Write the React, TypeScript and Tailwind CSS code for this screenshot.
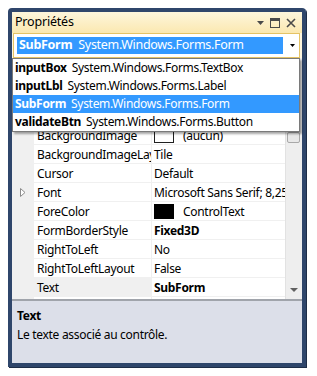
import React from "react";

type Row = {
  name: string;
  value: string;
  bold?: boolean;
  swatch?: "empty" | "black";
  expand?: boolean;
  selected?: boolean;
};

const rows: Row[] = [
  { name: "BackgroundImage", value: "(aucun)", swatch: "empty" },
  { name: "BackgroundImageLayout", value: "Tile" },
  { name: "Cursor", value: "Default" },
  { name: "Font", value: "Microsoft Sans Serif; 8,25pt", expand: true },
  { name: "ForeColor", value: "ControlText", swatch: "black" },
  { name: "FormBorderStyle", value: "Fixed3D", bold: true },
  { name: "RightToLeft", value: "No" },
  { name: "RightToLeftLayout", value: "False" },
  { name: "Text", value: "SubForm", bold: true, selected: true },
  { name: "TopMost", value: "False" },
];

const objects = [
  { name: "inputBox", type: "System.Windows.Forms.TextBox" },
  { name: "inputLbl", type: "System.Windows.Forms.Label" },
  { name: "SubForm", type: "System.Windows.Forms.Form", active: true },
  { name: "validateBtn", type: "System.Windows.Forms.Button" },
];

const font = { fontFamily: '"Noto Sans", "Open Sans", sans-serif' };

const GridRow = ({ row }: { row: Row }) => (
  <div className="flex h-[19px] text-[12px] leading-[19px] tracking-[-0.3px] text-black">
    <div className="flex w-[22px] shrink-0 items-center justify-center bg-[#f0f0f0]">
      {row.expand && (
        <svg width="6" height="9" viewBox="0 0 6 9">
          <path d="M0.5 0.5 L5 4.5 L0.5 8.5 Z" fill="white" stroke="#8c8c8c" />
        </svg>
      )}
    </div>
    <div
      className={`w-[118px] shrink-0 overflow-hidden whitespace-nowrap border-b border-r border-[#f0f0f0] pl-[3px] ${
        row.selected ? "bg-[#f0f0f0]" : "bg-white"
      }`}
    >
      {row.name}
    </div>
    <div
      className={`flex flex-1 items-center overflow-hidden whitespace-nowrap border-b border-[#f0f0f0] bg-white pl-[2px] ${
        row.bold ? "font-bold" : ""
      }`}
    >
      {row.swatch === "empty" && (
        <span className="mr-[9px] h-[15px] w-[20px] shrink-0 border border-[#202020] bg-white" />
      )}
      {row.swatch === "black" && (
        <span className="mr-[9px] h-[15px] w-[20px] shrink-0 bg-black" />
      )}
      {row.value}
    </div>
  </div>
);

export default function App() {
  return (
    <div className="h-[376px] w-[317px] bg-white pl-[8px] pt-[8px]" style={font}>
      <div className="flex h-[359px] w-[298px] flex-col rounded-t-[4px] border-4 border-[#2f466b] shadow-[1px_1px_0_#1d2d47]">
        {/* title bar */}
        <div className="flex h-[21px] items-center bg-gradient-to-b from-[#fdf6dc] to-[#fbe8b0] pl-[3px] pr-[6px]">
          <span className="text-[12.5px] tracking-[-0.2px] text-black">Propriétés</span>
          <div className="ml-auto flex items-center gap-[6px]">
            <svg width="7" height="4" viewBox="0 0 7 4">
              <path d="M0 0 H7 L3.5 4 Z" fill="#4a4a4a" />
            </svg>
            <svg width="10" height="10" viewBox="0 0 10 10">
              <rect x="0.5" y="0.5" width="9" height="9" fill="none" stroke="#4a4a4a" />
              <rect x="0" y="0" width="10" height="3" fill="#4a4a4a" />
            </svg>
            <svg width="10" height="10" viewBox="0 0 10 10">
              <path d="M1 1 L9 9 M9 1 L1 9" stroke="#4a4a4a" strokeWidth="1.6" />
            </svg>
          </div>
        </div>

        {/* object combo */}
        <div className="h-[25px] bg-[#fef6de] pl-[1px] pr-[2px]">
          <div className="flex h-[25px] border border-[#e5c365] bg-white">
            <div className="m-[3px] flex flex-1 items-center bg-[#3399ff] pl-[2px] text-[12.5px] tracking-[-0.3px] text-white">
              <span className="font-bold">SubForm</span>
              <span className="ml-[6px]">System.Windows.Forms.Form</span>
            </div>
            <div className="flex w-[13px] items-center justify-center">
              <svg width="5" height="3" viewBox="0 0 5 3">
                <path d="M0 0 H5 L2.5 3 Z" fill="black" />
              </svg>
            </div>
          </div>
        </div>

        {/* property grid */}
        <div className="relative flex h-[241px]">
          <div className="flex flex-1 flex-col overflow-hidden">
            <div className="flex h-[68px] shrink-0">
              <div className="w-[22px] bg-[#f0f0f0]" />
              <div className="flex-1 bg-white" />
            </div>
            {rows.map((r) => (
              <GridRow key={r.name} row={r} />
            ))}
          </div>
          <div className="relative w-[17px] shrink-0 border-l border-[#e2e2e2] bg-[#eeeeee]">
            <div className="absolute left-[1px] top-[74px] h-[11px] w-[13px] rounded-[2px] border border-[#a8a8a8] bg-[#e8e8e8]" />
            <svg
              className="absolute bottom-[7px] left-[4px]"
              width="8"
              height="4"
              viewBox="0 0 8 4"
            >
              <path d="M0 0 H8 L4 4 Z" fill="#606060" />
            </svg>
          </div>

          {/* drop down list over the grid */}
          <div className="absolute left-0 top-0 w-[288px] border border-[#7a7a7a] bg-white shadow-[2px_2px_2px_rgba(0,0,0,0.35)]">
            {objects.map((o) => (
              <div
                key={o.name}
                className={`flex h-[18px] items-center whitespace-nowrap pl-[2px] text-[12px] tracking-[-0.3px] ${
                  o.active ? "bg-[#3399ff] text-white" : "text-black"
                }`}
              >
                <span className="font-bold">{o.name}</span>
                <span className="ml-[5px]">{o.type}</span>
              </div>
            ))}
          </div>
        </div>

        {/* description */}
        <div className="flex-1 border-t-2 border-[#a0a4ab] bg-[#dcdfe9] px-[5px] pt-[5px] text-[12px] tracking-[-0.3px] text-black">
          <div className="font-bold leading-[19px]">Text</div>
          <div className="leading-[19px]">Le texte associé au contrôle.</div>
        </div>
      </div>
    </div>
  );
}
